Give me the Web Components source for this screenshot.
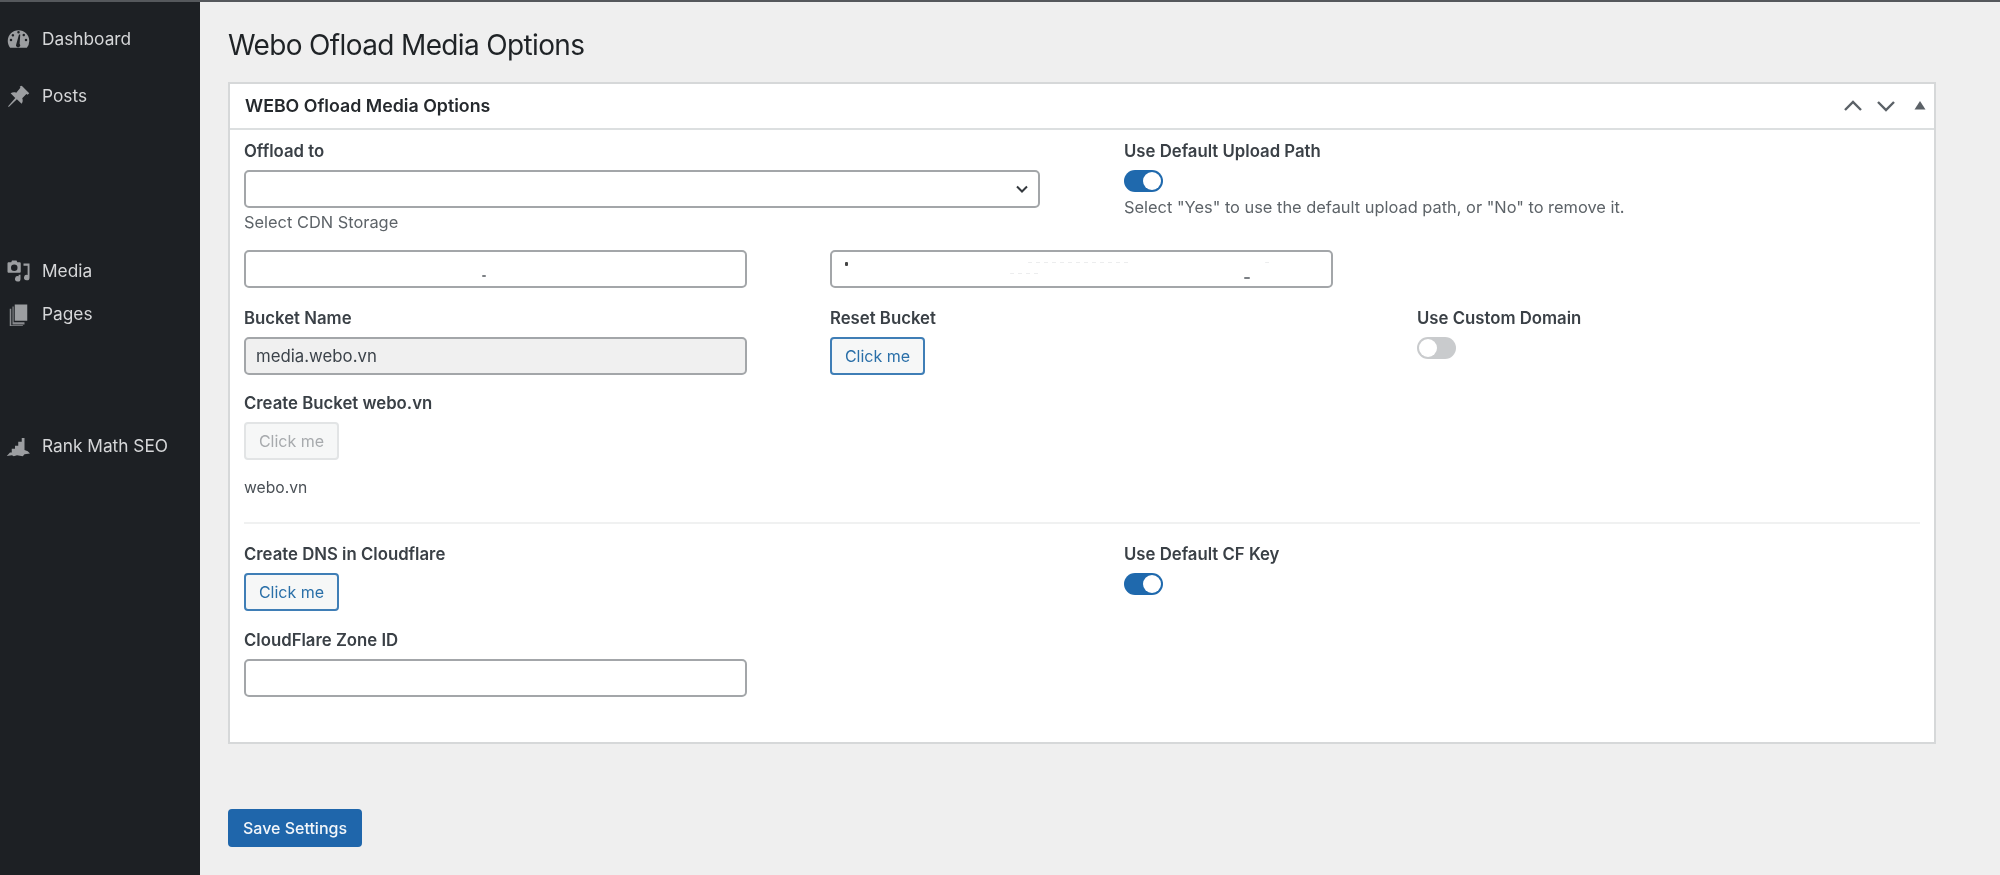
<!DOCTYPE html>
<html lang="en"><head><meta charset="utf-8"><title>Webo Ofload Media Options</title>
<style>
html,body{margin:0;height:100%;background:#efefef}
body{font-family:Inter,"Liberation Sans",sans-serif;overflow:hidden}
</style></head>
<body>
<wp-admin>
  <wp-sidebar slot="side">
    <wp-menu-item icon="dash" style="margin-top:27px">Dashboard</wp-menu-item>
    <wp-menu-item icon="pin" style="margin-top:37px">Posts</wp-menu-item>
    <wp-menu-item icon="media" style="margin-top:155px">Media</wp-menu-item>
    <wp-menu-item icon="pages" style="margin-top:23px">Pages</wp-menu-item>
    <wp-menu-item icon="rank" style="margin-top:112px">Rank Math SEO</wp-menu-item>
  </wp-sidebar>
  <wp-title>Webo Ofload Media Options</wp-title>
  <wp-metabox heading="WEBO Ofload Media Options">
    <wp-grid cols="880px 1fr">
      <wp-field label="Offload to">
        <wp-input width="796" select></wp-input>
        <wp-help>Select CDN Storage</wp-help>
      </wp-field>
      <wp-field label="Use Default Upload Path">
        <wp-toggle on></wp-toggle>
        <wp-help style="margin-top:5px">Select "Yes" to use the default upload path, or "No" to remove it.</wp-help>
      </wp-field>
    </wp-grid>
    <wp-grid cols="586px 1fr" style="margin-top:18.5px">
      <wp-input width="503" specks="a"></wp-input>
      <wp-input width="503" specks="b"></wp-input>
    </wp-grid>
    <wp-grid cols="586px 587px 1fr" style="margin-top:19px">
      <wp-field label="Bucket Name"><wp-input width="503" disabled value="media.webo.vn"></wp-input></wp-field>
      <wp-field label="Reset Bucket"><wp-button kind="outline" w="95">Click me</wp-button></wp-field>
      <wp-field label="Use Custom Domain"><wp-toggle></wp-toggle></wp-field>
    </wp-grid>
    <wp-field label="Create Bucket webo.vn" style="margin-top:18px"><wp-button kind="disabled" w="95">Click me</wp-button></wp-field>
    <wp-note>webo.vn</wp-note>
    <wp-rule></wp-rule>
    <wp-grid cols="880px 1fr">
      <wp-field label="Create DNS in Cloudflare"><wp-button kind="outline" w="95">Click me</wp-button></wp-field>
      <wp-field label="Use Default CF Key"><wp-toggle on></wp-toggle></wp-field>
    </wp-grid>
    <wp-field label="CloudFlare Zone ID" style="margin-top:19px"><wp-input width="503"></wp-input></wp-field>
  </wp-metabox>
  <wp-button kind="primary" w="134" style="margin-top:65px">Save Settings</wp-button>
</wp-admin>
<script>
function def(name, css, html, init){
  customElements.define(name, class extends HTMLElement{
    connectedCallback(){
      if(this.shadowRoot) return;
      const r=this.attachShadow({mode:'open'});
      r.innerHTML='<style>'+css+'</style>'+(typeof html==='function'?html(this):html);
      if(init) init(this,r);
    }
  });
}
def('wp-admin',`
  :host{display:grid;grid-template-columns:200px 1fr;height:875px;box-sizing:border-box;border-top:2px solid #55585c;background:#efefef;color:#2c3338;filter:blur(.5px)}
  main{padding:0 64px 0 28px;min-width:0;display:flex;flex-direction:column;align-items:stretch}
  ::slotted(wp-button){align-self:flex-start}
`,`<slot name="side"></slot><main><slot></slot></main>`);
def('wp-sidebar',`:host{display:flex;flex-direction:column;background:#1d2024;color:#dfe0e1;height:100%}`,`<slot></slot>`);
const icons={
 dash:'<path fill-rule="evenodd" d="M10 2.5a8.6 8.6 0 0 0-8.6 8.6c0 2 .7 3.9 1.9 5.4h13.4a8.6 8.6 0 0 0 1.9-5.4A8.6 8.6 0 0 0 10 2.5zM9 4.2a1 1 0 1 1 2 0 1 1 0 0 1-2 0zM4.7 6a1 1 0 1 1 1.6 1.2A1 1 0 0 1 4.7 6zm8.7-.2a1 1 0 1 1 1.6 1.2 1 1 0 0 1-1.6-1.2zM3 10.4a1 1 0 1 1 2 0 1 1 0 0 1-2 0zm12 0a1 1 0 1 1 2 0 1 1 0 0 1-2 0zM11.4 6l-.5 7.3a1.7 1.7 0 1 1-2.7.4L10.4 6z"/>',
 pin:'<path d="M12.6 1.4l6 6-1.3 1.1-1-.5-3.3 3.3c.7 1.7.4 3.2-.5 4.5l-3.8-3.7L2.2 18.3l-.5-.5 5.7-6.6-3.7-3.8c1.3-.9 2.8-1.2 4.5-.5L11.5 3l-.5-1z"/>',
 media:'<path fill-rule="evenodd" d="M2.2 2.6h2l.6-1.4h3.6l.7 1.4h1.7c.6 0 1 .4 1 1V10c0 .6-.4 1-1 1H2.2c-.6 0-1-.4-1-1V3.6c0-.6.4-1 1-1zM6.6 4.3a2.6 2.6 0 1 0 0 5.2 2.6 2.6 0 0 0 0-5.2z"/><path d="M14 3.6h4.8v11.2a2.2 2.2 0 1 1-1.5-2V5.4H14zM11.600 12.500v3.200a2.200 2.200 0 1 1-1.500-2v-1.200z"/>',
 pages:'<path d="M7 2h10v13H7z"/><path fill-rule="evenodd" opacity=".85" d="M5.2 3.6h.9v12.6h8.7v1.8H5.2zM3 5.4h1.2v13.200h9.300v.6H3z"/>',
 rank:'<path d="M.6 17.600l2.600-2.800h1.400v-3h2.600V9.400h2.600V6.200h2.800V3.200h2.200v9.600l2.600 1 1.800 1.800-4.400.6-1.400 1.600-4.600-.8-2.600.8-1.400-.8z"/>'
};
def('wp-menu-item',`
  :host{display:flex;align-items:center;height:20px;padding-left:6px;font-size:17.3px;line-height:20px;color:#d6d7d9}
  svg{width:25px;height:25px;fill:#9c9ea1;margin-right:11px;flex:none}
`,h=>`<svg viewBox="0 0 20 20">${icons[h.getAttribute('icon')]}</svg><slot></slot>`);
def('wp-title',`:host{display:block;font-size:28px;line-height:36px;font-weight:400;color:#1f2326;margin-top:25px;letter-spacing:-.64px}`,`<slot></slot>`);
def('wp-metabox',`
  :host{display:block;background:#fff;border:2px solid #d6d8d9;margin-top:19px;box-sizing:border-box;height:662px;color:#3c434a}
  header{height:44px;border-bottom:2px solid #dcdfe0;display:flex;align-items:center;justify-content:space-between;padding:0 7.5px 0 15px}
  h2{margin:0 0 1px;font-size:17.8px;font-weight:600;color:#25292d}
  .ctl{display:flex;align-items:center}
  svg{display:block;fill:none;stroke:#5b6167;stroke-width:2.4}
  .body{padding:9.5px 14px 0 14px}
`,h=>`<header><h2>${h.getAttribute('heading')}</h2><div class="ctl" aria-hidden="true">
  <svg width="20" height="20" viewBox="0 0 20 20" style="margin-right:12.5px"><path d="M2 14 10 6l8 8"/></svg>
  <svg width="20" height="20" viewBox="0 0 20 20" style="margin-right:17px"><path d="M2 6l8 8 8-8"/></svg>
  <svg width="14" height="14" viewBox="0 0 14 14"><path d="M7 2l5.500 8.500h-11z" fill="#5b6167" stroke="none"/></svg>
</div></header><div class="body"><slot></slot></div>`);
def('wp-grid',`:host{display:grid;align-items:start}`,`<slot></slot>`,(h)=>{h.style.gridTemplateColumns=h.getAttribute('cols')});
def('wp-field',`
  :host{display:block}
  .l{font-size:16.75px;font-weight:600;line-height:20px;margin:1px 0 9px;color:#3a4046}
`,h=>`<div class="l">${h.getAttribute('label')}</div><slot></slot>`);
def('wp-input',`
  :host{display:block;box-sizing:border-box;height:38px;border:2px solid #a3a6a9;border-radius:5px;background:#fff;position:relative;font-size:16.8px;line-height:34px;padding-left:10px;color:#3c434a}
  :host([disabled]){background:#f0f0f0}
  svg{position:absolute;right:8px;top:9px;fill:none;stroke:#33383d;stroke-width:2}
  i{position:absolute;background:#7c8085;height:2px;border-radius:1px}
  i.f{height:1px;background:repeating-linear-gradient(90deg,#ecedee 0 4px,#fff 4px 8px)}
`,h=>{
  h.style.width=h.getAttribute('width')+'px';
  let s=h.getAttribute('value')||'';
  if(h.hasAttribute('select')) s+='<svg width="16" height="16" viewBox="0 0 16 16"><path d="M3 5.500 8 10.500 13 5.500"/></svg>';
  const m=h.getAttribute('specks');
  if(m==='a') s+='<i style="left:236px;top:23px;width:4px"></i>';
  if(m==='b') s+='<i style="left:13px;top:10px;width:3px;height:4px;background:#444"></i><i class="f" style="left:196px;top:10px;width:104px"></i><i class="f" style="left:178px;top:21px;width:30px"></i><i style="left:412px;top:25px;width:6px"></i><i class="f" style="left:433px;top:10px;width:8px"></i>';
  return s;
});
def('wp-help',`:host{display:block;font-size:16.4px;line-height:20px;margin-top:4px;color:#5d6368}`,`<slot></slot>`);
def('wp-toggle',`
  :host{display:block;width:38.5px;height:22px;border-radius:11px;background:#c9cbcd;position:relative;margin-top:4px}
  :host([on]){background:#1f69ad}
  i{position:absolute;top:2px;left:2px;width:18px;height:18px;border-radius:50%;background:#fff}
  :host([on]) i{left:18.5px}
`,`<i></i>`);
def('wp-button',`
  :host{display:flex;align-items:center;justify-content:center;box-sizing:border-box;height:38px;border-radius:4px;font-size:16px;background:#f6f7f7;border:2px solid #3f7eb6;color:#2a6fa8}
  :host([kind=disabled]){border-color:#e2e4e5;color:#a7aaad;background:#f6f7f7}
  :host([kind=primary]){background:#1f66ab;border-color:#1f66ab;color:#f2f6fa;font-weight:500}
`,`<slot></slot>`,h=>{h.style.width=h.getAttribute('w')+'px'});
def('wp-note',`:host{display:block;font-size:15.7px;line-height:20px;margin-top:18px;color:#4a5056}`,`<slot></slot>`);
def('wp-rule',`:host{display:block;height:2px;background:#f0f1f1;margin:23.5px 0 19px}`,``);
</script>
</body></html>
